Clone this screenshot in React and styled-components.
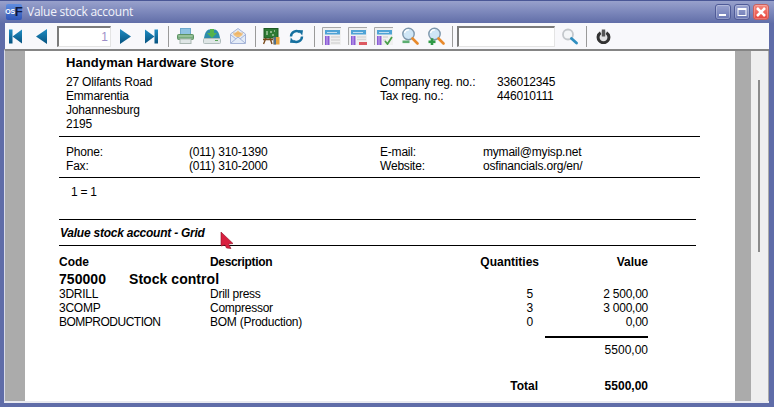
import React from "react";
import styled, { createGlobalStyle } from "styled-components";

const Global = createGlobalStyle`
  html, body { margin: 0; padding: 0; background: #6a76ae; }
  #root { width: 774px; height: 407px; overflow: hidden; }
`;

const Win = styled.div`
  width: 774px; height: 407px; display: flex; flex-direction: column; overflow: hidden;
  background: #5f6ca8; border-top: 1px solid #4a5796; box-sizing: border-box;
  font-family: "Liberation Sans", Arial, sans-serif; color: #000;
`;
const TitleBar = styled.div`
  height: 22px; flex: none; display: flex; align-items: center; padding: 0 5px 0 6px;
  background: linear-gradient(#98a1cc, #7f8abd 45%, #616ea8);
`;
const AppBadge = styled.div`
  width: 16px; height: 16px; border-radius: 2px; background: linear-gradient(#5f8de0, #2f55b8);
  display: flex; align-items: center; justify-content: center; flex: none;
  font: bold 7px/16px "Liberation Sans", sans-serif; color: #fff; letter-spacing: -0.3px;
  b { color: #10183c; font-size: 13px; letter-spacing: 0; }
`;
const Title = styled.div`
  margin-left: 5px; flex: 1; color: #f2f3fa; font: 12px/20px "Open Sans", sans-serif; white-space: nowrap; letter-spacing: -0.25px;
`;
const WinBtn = styled.div`
  width: 16px; height: 16px; margin-left: 3px; border-radius: 3px; box-sizing: border-box;
  border: 1px solid ${p => p.$close ? "#c9605e" : "#4f5b98"};
  background: ${p => p.$close ? "linear-gradient(#f58a80,#e8453c)" : "linear-gradient(#9aa3d0,#6b78b4)"};
  display: flex; align-items: center; justify-content: center; box-shadow: inset 0 0 0 1px rgba(255,255,255,.25);
`;
const Toolbar = styled.div`
  height: 26px; flex: none; display: flex; align-items: center; margin: 0 5px 0 5px;
  padding-left: 0; background: #f8f8fb; box-sizing: border-box;
`;
const Tool = styled.div`
  width: ${p => p.$w}px; height: 24px; flex: none; display: flex; align-items: center; justify-content: center;
`;
const Sep = styled.div`
  width: ${p => p.$w}px; height: 21px; flex: none; display: flex; justify-content: center;
  &::before { content: ""; width: 1px; background: #9a9a9a; }
`;
const PageInput = styled.div`
  width: ${p => p.$w}px; height: 21px; flex: none; box-sizing: border-box; background: #fff;
  border: 1px solid #e4e4e4; border-top: 2px solid #7b7b7b; border-left: 2px solid #7b7b7b;
  margin-left: ${p => p.$ml || 0}px;
  font: 12px/18px "Liberation Sans", sans-serif; color: #9d8fc8; text-align: right; padding-right: 2px;
`;
const Viewer = styled.div`
  flex: 1; min-height: 0; display: flex; margin: 0 5px 4px 4px; padding: 0 0 0 1px;
  border-top: 2px solid #858585; border-left: 1px solid #d8dbe9; border-bottom: 2px solid #e9eaf0;
  background: #ababab; box-sizing: border-box;
`;
const Gutter = styled.div`
  flex: none; width: 19px; background: #ababab;
`;
const Page = styled.div`
  flex: none; width: 710px; background: #fff; position: relative; padding-top: 5px; box-sizing: border-box; overflow: hidden;
  font-size: 12px; line-height: 14px;
`;
const GutterRight = styled.div`
  flex: none; width: 16px; background: #ababab;
`;
const Scroll = styled.div`
  flex: none; width: 17px; background: #efefef; position: relative; padding-top: 29px; box-sizing: border-box;
  display: flex; justify-content: center;
`;
const Thumb = styled.div`
  width: 2px; height: 172px; background: #8a8a8a; margin-left: -1px;
`;
const CompanyName = styled.div`
  margin-left: 41px; font-weight: bold; font-size: 13px; letter-spacing: 0.08px;
`;
const HeadGrid = styled.div`
  display: grid; grid-template-columns: ${p => p.$cols}; margin-left: 41px; margin-top: ${p => p.$mt}px; letter-spacing: -0.2px;
`;
const Cell = styled.div`white-space: nowrap;`;
const CodeCell = styled(Cell)`letter-spacing: ${p => p.$tight ? "-0.5px" : "inherit"};`;
const Rule = styled.div`
  margin: ${p => p.$mt}px 0 0 34px; width: ${p => p.$w}px; height: ${p => p.$h || 1}px; background: #000;
`;
const Filter = styled.div`
  margin: 7px 0 0 46px; letter-spacing: -0.3px;
`;
const ReportTitle = styled.div`
  margin: 6px 0 0 35px; font-weight: bold; font-style: italic; font-size: 12px; letter-spacing: -0.24px;
`;
const TableHead = styled.div`
  display: grid; grid-template-columns: 151px 229px 100px 109px; margin: 9px 0 0 34px; font-weight: bold; font-size: 12px; letter-spacing: 0;
`;
const DescHead = styled(Cell)`letter-spacing: -0.35px;`;
const Account = styled.div`
  display: grid; grid-template-columns: 70px 1fr; margin: 3px 0 0 34px; font-weight: bold; font-size: 14px; letter-spacing: 0.05px;
`;
const Rows = styled.div`margin-top: 1px;`;
const Row = styled.div`
  display: grid; grid-template-columns: 151px 229px 94px 115px; margin-left: 34px; letter-spacing: -0.25px;
`;
const Right = styled.div`text-align: right; white-space: nowrap;`;
const SumRule = styled.div`
  margin: 7px 0 0 520px; width: 103px; height: 2px; background: #000;
`;
const Sum = styled.div`
  margin: 5px 0 0 34px; width: 589px; text-align: right;
`;
const TotalRow = styled.div`
  display: grid; grid-template-columns: 479px 110px; margin: 22px 0 0 34px; font-weight: bold;
`;
const Cursor = styled.svg`
  position: absolute; left: 195px; top: 180px;
`;

const Nav = ({ dir, bar }) => (
  <svg width="14" height="15" viewBox="0 0 14 15">
    <defs><linearGradient id={"n" + dir + bar} x1="0" y1="0" x2="0" y2="1"><stop offset="0" stopColor="#1f8dc4" /><stop offset="1" stopColor="#06527f" /></linearGradient></defs>
    <g transform={dir === "r" ? "translate(14,0) scale(-1,1)" : undefined} fill={`url(#n${dir}${bar})`}>
      {bar ? <><rect x="0" y="0.5" width="3.5" height="14" /><path d="M13 0.5V14.5L3.5 7.5Z" /></> : <path d="M12 0V15L1 7.5Z" />}
    </g>
  </svg>
);
const Printer = () => (
  <svg width="17" height="16" viewBox="0 0 17 16">
    <rect x="3.5" y="0.5" width="10" height="6" fill="#8ec3e2" stroke="#6fa9cc" />
    <rect x="0.5" y="6.5" width="16" height="5" rx="1" fill="#78ad7e" stroke="#5d9263" />
    <rect x="3" y="11" width="11" height="4.5" fill="#dfe6e6" stroke="#a9b7b2" />
    <rect x="1.5" y="7.5" width="14" height="1" fill="#b5d5b5" />
  </svg>
);
const Download = () => (
  <svg width="18" height="16" viewBox="0 0 18 16">
    <path d="M1 10C2 4 4 2 6 1.5h6c2 .5 4 2.5 5 8.5v1H1Z" fill="#2d8cab" />
    <path d="M7 1h4v4h3l-5 5-5-5h3Z" fill="#55b34b" />
    <rect x="0.5" y="10.5" width="17" height="5" rx="1" fill="#dfe6e6" stroke="#b0bcbc" />
    <rect x="12" y="12" width="3" height="1" fill="#5aa85a" />
  </svg>
);
const Mail = () => (
  <svg width="16" height="16" viewBox="0 0 16 16">
    <path d="M8 0.5L15.5 6V15.5H0.5V6Z" fill="#e4ecf8" stroke="#a5b4d8" />
    <path d="M3.5 7L8 2.5 12.5 7 8 10Z" fill="#f3c27c" />
    <path d="M3 4.5h10v2H3Z" fill="#e9a54e" opacity="0.5" />
    <path d="M1 15L8 9l7 6M1 7l5 4M15 7l-5 4" fill="none" stroke="#a5b4d8" />
  </svg>
);
const Board = () => (
  <svg width="17" height="17" viewBox="0 0 17 17">
    <rect x="1" y="0.5" width="14" height="9.5" fill="#2e7a34" stroke="#1f5a24" />
    <path d="M3 6h2M4 3v2M7 4h2M9 7h2M11 3h1" stroke="#dff0d8" />
    <path d="M3 10L0.5 16M7 10l2 6M0 11.5h10" stroke="#7a4a1c" strokeWidth="1.4" />
    <rect x="10.5" y="9" width="6" height="7.5" fill="#e6a23c" />
    <rect x="10.5" y="9" width="2.5" height="7.5" fill="#4e6f8c" />
  </svg>
);
const Refresh = () => (
  <svg width="15" height="15" viewBox="0 0 15 15" fill="none">
    <path d="M2 7.5A5.5 5.5 0 0 1 11 3.3" stroke="#16709f" strokeWidth="2.4" />
    <path d="M8.8 1L14 1.2 13.2 6.5Z" fill="#16709f" />
    <path d="M13 7.5A5.5 5.5 0 0 1 4 11.7" stroke="#16709f" strokeWidth="2.4" />
    <path d="M6.2 14L1 13.8 1.8 8.5Z" fill="#16709f" />
  </svg>
);
const Report = ({ kind }) => (
  <svg width="19" height="18" viewBox="0 0 19 18">
    <path d="M0.5 18V0.5H19" fill="none" stroke="#a8a8a8" />
    <rect x="1" y="1" width="18" height="17" fill="#f0f0f0" />
    <rect x="3" y="3" width="15" height="4.5" fill="#4fa3d6" />
    <rect x="5" y="5" width="10" height="1" fill="#c4e0f2" />
    <rect x="3" y="9" width="4.5" height="9" fill="#8a5bd6" />
    <rect x="4.5" y="9" width="1" height="9" fill="#c7b0ee" />
    {kind !== "red" && kind !== "check" && <path d="M9 10h9M9 13h9M9 16h9" stroke="#d6d6d6" strokeWidth="1.4" />}
    {kind === "red" && <><path d="M9 10h9M9 12.5h9" stroke="#d6d6d6" strokeWidth="1.4" /><rect x="11" y="15" width="8" height="3" fill="#dd5a62" /></>}
    {kind === "check" && <><path d="M9 10h5M9 13h3" stroke="#d6d6d6" strokeWidth="1.4" /><path d="M11 14l2.5 3L18 10" fill="none" stroke="#4aa04a" strokeWidth="1.8" /></>}
  </svg>
);
const Zoom = ({ plus }) => (
  <svg width="18" height="18" viewBox="0 0 18 18">
    <circle cx="7.5" cy="7" r="5.7" fill="#cfe6f6" stroke="#7e97ac" strokeWidth="1.4" />
    <path d="M3.5 6A4 4 0 0 1 8 3" fill="none" stroke="#fff" strokeWidth="1.2" />
    <path d="M11.5 11.5L16.5 16.5" stroke="#e88a2c" strokeWidth="2.6" strokeLinecap="round" />
    <rect x="1.5" y="13.5" width="7" height="2.6" fill={plus ? "#2f9a46" : "#5dae72"} />
    {plus && <rect x="3.7" y="11.3" width="2.6" height="7" fill="#2f9a46" />}
  </svg>
);
const Search = () => (
  <svg width="17" height="17" viewBox="0 0 17 17">
    <circle cx="7" cy="6.5" r="5" fill="#f4f6f8" stroke="#c4c8cc" strokeWidth="1.8" />
    <path d="M10.5 10.5L15.5 15" stroke="#2f8ec0" strokeWidth="2.8" strokeLinecap="round" />
  </svg>
);
const Power = () => (
  <svg width="15" height="15" viewBox="0 0 15 15" fill="none">
    <circle cx="7.5" cy="8" r="6.5" fill="#c9c9c9" opacity="0.5" />
    <path d="M4.6 3.8A5.4 5.4 0 1 0 10.4 3.8" stroke="#333" strokeWidth="3" />
    <rect x="5.8" y="0.5" width="3.4" height="7" fill="#555" />
  </svg>
);

export default function App() {
  return (
    <Win>
      <Global />
      <TitleBar>
        <AppBadge>OS<b>F</b></AppBadge>
        <Title>Value stock account</Title>
        <WinBtn>
          <svg width="10" height="10" viewBox="0 0 10 10"><rect x="1" y="7" width="7" height="2" fill="#fff" /></svg>
        </WinBtn>
        <WinBtn>
          <svg width="10" height="10" viewBox="0 0 10 10"><rect x="1" y="1.5" width="8" height="7" fill="none" stroke="#fff" /><rect x="1" y="1" width="8" height="2" fill="#fff" /></svg>
        </WinBtn>
        <WinBtn $close>
          <svg width="12" height="12" viewBox="0 0 12 12"><path d="M2 2l8 8M10 2l-8 8" stroke="#fff" strokeWidth="2.6" /></svg>
        </WinBtn>
      </TitleBar>
      <Toolbar>
        <Tool $w={21}><Nav dir="l" bar /></Tool>
        <Tool $w={31}><Nav dir="l" /></Tool>
        <PageInput $w={54}>1</PageInput>
        <Tool $w={27}><Nav dir="r" /></Tool>
        <Tool $w={26}><Nav dir="r" bar /></Tool>
        <Sep $w={8} />
        <Tool $w={26}><Printer /></Tool>
        <Tool $w={27}><Download /></Tool>
        <Tool $w={25}><Mail /></Tool>
        <Sep $w={10} />
        <Tool $w={23}><Board /></Tool>
        <Tool $w={26}><Refresh /></Tool>
        <Sep $w={10} />
        <Tool $w={25}><Report /></Tool>
        <Tool $w={26}><Report kind="red" /></Tool>
        <Tool $w={26}><Report kind="check" /></Tool>
        <Tool $w={27}><Zoom /></Tool>
        <Tool $w={25}><Zoom plus /></Tool>
        <Sep $w={8} />
        <PageInput $w={98} $ml={1} />
        <Tool $w={28}><Search /></Tool>
        <Sep $w={7} />
        <Tool $w={26}><Power /></Tool>
      </Toolbar>
      <Viewer>
        <Gutter />
        <Page>
          <CompanyName>Handyman Hardware Store</CompanyName>
          <HeadGrid $cols="314px 117px 1fr" $mt={5}>
            <Cell>27 Olifants Road</Cell><Cell>Company reg. no.:</Cell><Cell>336012345</Cell>
            <Cell>Emmarentia</Cell><Cell>Tax reg. no.:</Cell><Cell>446010111</Cell>
            <Cell>Johannesburg</Cell><Cell /><Cell />
            <Cell>2195</Cell><Cell /><Cell />
          </HeadGrid>
          <Rule $mt={5} $w={641} />
          <HeadGrid $cols="123px 191px 103px 1fr" $mt={8}>
            <Cell>Phone:</Cell><Cell>(011) 310-1390</Cell><Cell>E-mail:</Cell><Cell>mymail@myisp.net</Cell>
            <Cell>Fax:</Cell><Cell>(011) 310-2000</Cell><Cell>Website:</Cell><Cell>osfinancials.org/en/</Cell>
          </HeadGrid>
          <Rule $mt={4} $w={641} />
          <Filter>1 = 1</Filter>
          <Rule $mt={20} $w={637} />
          <ReportTitle>Value stock account - Grid</ReportTitle>
          <Rule $mt={5} $w={637} />
          <TableHead>
            <Cell>Code</Cell><DescHead>Description</DescHead><Right>Quantities</Right><Right>Value</Right>
          </TableHead>
          <Account><Cell>750000</Cell><Cell>Stock control</Cell></Account>
          <Rows>
            <Row><Cell>3DRILL</Cell><Cell>Drill press</Cell><Right>5</Right><Right>2 500,00</Right></Row>
            <Row><Cell>3COMP</Cell><Cell>Compressor</Cell><Right>3</Right><Right>3 000,00</Right></Row>
            <Row><CodeCell $tight>BOMPRODUCTION</CodeCell><Cell>BOM (Production)</Cell><Right>0</Right><Right>0,00</Right></Row>
          </Rows>
          <SumRule />
          <Sum>5500,00</Sum>
          <TotalRow><Right>Total</Right><Right>5500,00</Right></TotalRow>
          <Cursor width="14" height="18" viewBox="0 0 14 18">
            <path d="M1 1L13 12.5 8.5 13 11 17.5 6.5 17 5 14 1 15Z" fill="#d81f3f" stroke="#8d1226" strokeWidth="0.6" />
          </Cursor>
        </Page>
        <GutterRight />
        <Scroll><Thumb /></Scroll>
      </Viewer>
    </Win>
  );
}
